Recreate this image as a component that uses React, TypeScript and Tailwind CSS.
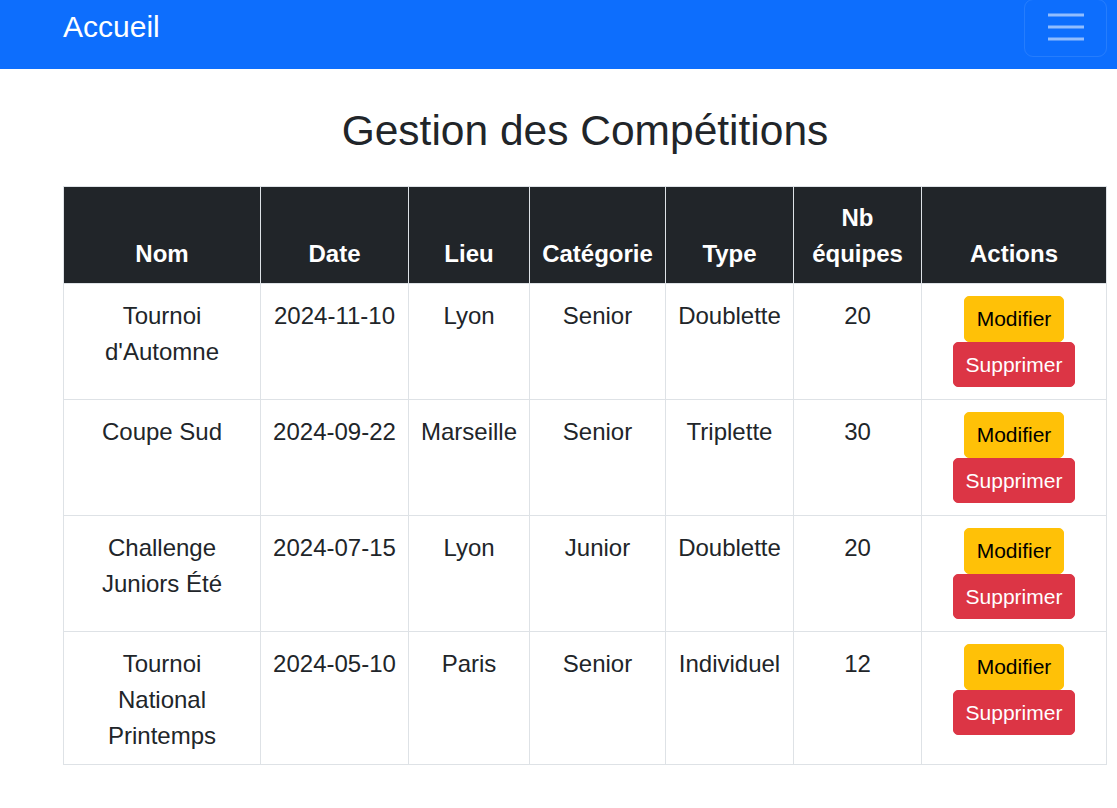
const rows = [
  { nom: "Tournoi d'Automne", date: '2024-11-10', lieu: 'Lyon', cat: 'Senior', type: 'Doublette', nb: 20 },
  { nom: 'Coupe Sud', date: '2024-09-22', lieu: 'Marseille', cat: 'Senior', type: 'Triplette', nb: 30 },
  { nom: 'Challenge Juniors Été', date: '2024-07-15', lieu: 'Lyon', cat: 'Junior', type: 'Doublette', nb: 20 },
  { nom: 'Tournoi National Printemps', date: '2024-05-10', lieu: 'Paris', cat: 'Senior', type: 'Individuel', nb: 12 },
];

const th = 'border border-[#dee2e6] px-[12px] pt-[13px] pb-[11px] align-bottom font-bold text-center';
const td = 'border border-[#dee2e6] px-[12px] pt-[14px] pb-[10px] align-top text-center';

export default function App() {
  return (
    <div className="min-h-screen bg-white text-[24px] leading-[1.5] text-[#212529] font-['Liberation_Sans',Arial,sans-serif]">
      <nav className="bg-[#0d6efd] h-[69px]">
        <div className="ml-[63px] w-[1044px] flex justify-between items-start">
          <a className="text-white text-[30px] leading-[45px] mt-[4px]">Accueil</a>
          <button className="-mt-px w-[83px] h-[58px] rounded-[9px] border border-white/10 flex items-center justify-center">
            <svg width="36" height="30" viewBox="0 0 36 30">
              <path d="M0 2h36M0 14h36M0 26h36" stroke="rgba(255,255,255,0.55)" strokeWidth="3" />
            </svg>
          </button>
        </div>
      </nav>

      <div className="ml-[63px] w-[1044px]">
        <h2 className="text-center text-[42.5px] leading-[1.2] font-normal mt-[36px] mb-[30px]">
          Gestion des Compétitions
        </h2>

        <table className="w-[1043px] table-fixed border-collapse">
          <colgroup>
            <col className="w-[197px]" />
            <col className="w-[148px]" />
            <col className="w-[121px]" />
            <col className="w-[136px]" />
            <col className="w-[128px]" />
            <col className="w-[128px]" />
            <col className="w-[185px]" />
          </colgroup>
          <thead className="bg-[#212529] text-white">
            <tr>
              <th className={th}>Nom</th>
              <th className={th}>Date</th>
              <th className={th}>Lieu</th>
              <th className={th}>Catégorie</th>
              <th className={th}>Type</th>
              <th className={th}>Nb équipes</th>
              <th className={th}>Actions</th>
            </tr>
          </thead>
          <tbody>
            {rows.map((r) => (
              <tr key={r.nom}>
                <td className={td}>{r.nom}</td>
                <td className={td}>{r.date}</td>
                <td className={td}>{r.lieu}</td>
                <td className={td}>{r.cat}</td>
                <td className={td}>{r.type}</td>
                <td className={td}>{r.nb}</td>
                <td className="border border-[#dee2e6] px-[12px] py-[12px] align-top text-center">
                  <div className="flex flex-col items-center">
                    <button className="bg-[#ffc107] text-black text-[21px] leading-[1.5] px-[12px] py-[6px] border border-[#ffc107] rounded-[5px]">
                      Modifier
                    </button>
                    <button className="bg-[#dc3545] text-white text-[21px] leading-[1.5] px-[12px] py-[6px] border border-[#dc3545] rounded-[5px]">
                      Supprimer
                    </button>
                  </div>
                </td>
              </tr>
            ))}
          </tbody>
        </table>
      </div>
    </div>
  );
}
